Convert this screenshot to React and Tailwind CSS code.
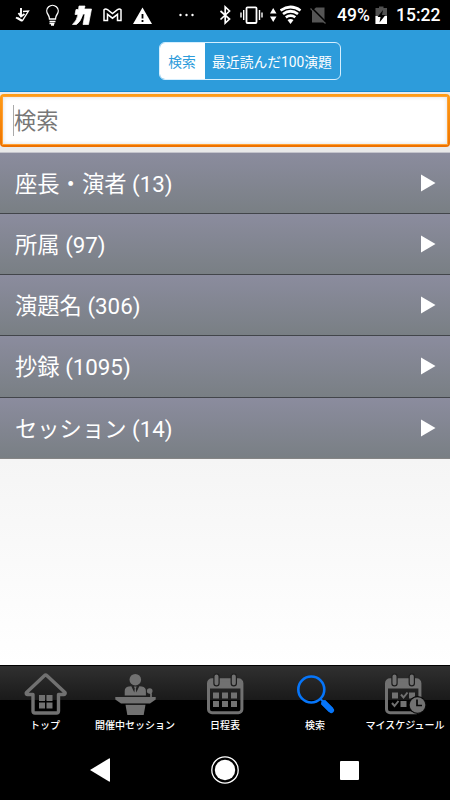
import React from 'react';

const results = [
  { label: '座長・演者', count: 13 },
  { label: '所属', count: 97 },
  { label: '演題名', count: 306 },
  { label: '抄録', count: 1095 },
  { label: 'セッション', count: 14 },
];

const HomeIcon = () => (
  <svg width="90" height="44" viewBox="0 0 90 44" fill="none" stroke="#717171">
    <path d="M33 23.500V40a2 2 0 0 0 2 2h21.500a2 2 0 0 0 2-2V23.500H64a1.300 1.300 0 0 0 1-2L46.500 4.300a1.200 1.200 0 0 0-1.700 0L26.500 21.500a1.200 1.200 0 0 0 .8 2z" strokeWidth="3.400" strokeLinejoin="round" />
    <path d="M39 24h6v6h-6zM46.500 24h6v6h-6zM39 31.500h6v6h-6zM46.500 31.500h6v6h-6z" fill="#717171" stroke="none" />
  </svg>
);

const PodiumIcon = () => (
  <svg width="90" height="44" viewBox="0 0 90 44" fill="#717171">
    <circle cx="45.300" cy="8.700" r="5.800" />
    <path d="M34.700 24.500V20q0-4 4-4.500l2.600-.3 3 6.300.5-4-.9-2h2.800l-.9 2 .5 4 3-6.300 2.600.3q4 .5 4 4.500v4.500z" />
    <path d="M25.300 26h40.400v2.500l-5.700 4H31l-5.700-4z" />
    <path d="M35.500 33.700h20L53.500 45h-16z" />
    <circle cx="59.700" cy="20" r="2.800" />
    <path d="M60 20q1.700 3 1 6.500" fill="none" stroke="#717171" strokeWidth="1.600" />
  </svg>
);

const CalendarFrame = () => (
  <>
    <path d="M29 9h33v8.500H29z" fill="#717171" />
    <rect x="28.500" y="8.800" width="33.400" height="33" rx="3.500" fill="none" stroke="#717171" strokeWidth="3" />
    <rect x="33.900" y="2.800" width="5.200" height="12" rx="2.600" fill="#717171" stroke="#1d1d1d" strokeWidth="1.200" />
    <rect x="51.200" y="2.800" width="5.200" height="12" rx="2.600" fill="#717171" stroke="#1d1d1d" strokeWidth="1.200" />
  </>
);

const CalendarIcon = () => (
  <svg width="90" height="44" viewBox="0 0 90 44">
    <CalendarFrame />
    <path d="M33 21.500h6v6h-6zM42 21.500h6v6h-6zM51 21.500h6v6h-6zM33 30h6v6h-6zM42 30h6v6h-6zM51 30h6v6h-6z" fill="#717171" />
  </svg>
);

const SearchIcon = () => (
  <svg width="90" height="44" viewBox="0 0 90 44" fill="none" stroke="#0675f9">
    <circle cx="41.300" cy="18.500" r="13" strokeWidth="2.600" />
    <path d="M50.500 28l2.500 2.500" strokeWidth="2" />
    <path d="M53 31l8 8" strokeWidth="6" />
    <path d="M54 32l7.300 7.300" strokeWidth="5.500" strokeLinecap="round" />
  </svg>
);

const ScheduleIcon = () => (
  <svg width="90" height="44" viewBox="0 0 90 44">
    <g transform="translate(-2 0)">
      <CalendarFrame />
    </g>
    <path d="M32 21.500h6v6h-6zM40.500 30h6v6h-6zM49 21.500h6v4l-4 2h-2z" fill="#717171" />
    <path d="M41 23.500l2.500 3 4-5M32 32l2.500 3 4-5" fill="none" stroke="#717171" strokeWidth="2" />
    <circle cx="57.500" cy="34" r="9" fill="#080808" />
    <circle cx="57.500" cy="34" r="7.800" fill="#717171" />
    <path d="M57 28.500v6h5" fill="none" stroke="#080808" strokeWidth="1.700" />
  </svg>
);

const tabs = [
  { label: 'トップ', Icon: HomeIcon },
  { label: '開催中セッション', Icon: PodiumIcon },
  { label: '日程表', Icon: CalendarIcon },
  { label: '検索', Icon: SearchIcon },
  { label: 'マイスケジュール', Icon: ScheduleIcon },
];

const StatusBar = () => (
  <div className="flex h-[30px] shrink-0 items-center bg-black text-white">
    {/* Notifications */}
    <svg className="ml-[15px] shrink-0" width="15" height="30" viewBox="15 0 15 30" fill="none" stroke="white">
      <path d="M21 8v8.500M18.500 13l2.500 3.500 3.500-2.500" strokeWidth="1.900" />
      <path d="M23 11.500l5.500-.5-6 9.500-5-3" strokeWidth="1.300" />
      <path d="M16 17.500l6 3.500" strokeWidth="2" />
    </svg>
    <svg className="ml-4 shrink-0" width="14" height="30" viewBox="46 0 14 30" fill="none" stroke="white" strokeWidth="1.300">
      <path d="M49.500 19q0-2.500-1.500-4.500a5.700 5.700 0 1 1 9 0q-1.500 2-1.500 4.500zM49.500 21.500h6M49.500 23.500h5M51 25h3" />
    </svg>
    <svg className="ml-3 shrink-0" width="21" height="30" viewBox="72 0 21 30" fill="white" stroke="white" strokeWidth=".7">
      <path d="M79 6h6l-.8 3h7.300L88.500 24.500H83L85 14h-2Q80.500 22 76.500 24.500h-4q4.500-4 5.500-10h-3l1-5h2.500z" />
    </svg>
    <svg className="ml-2.5 shrink-0" width="19" height="30" viewBox="103 0 19 30" fill="none" stroke="white" strokeWidth="1.500">
      <path d="M104 9.700v10.800h3.500V14.300l5 3.900 5-3.900v6.200h3.500V9.700q-1.500-1.500-3.500 0l-5 3.800-5-3.800q-2-1.500-3.500 0z" />
    </svg>
    <svg className="ml-[11px] shrink-0" width="19" height="30" viewBox="133 0 19 30">
      <path d="M142.500 7.500L152 24h-19z" fill="white" />
      <path d="M142.500 14v4.500M142.500 20v2" stroke="black" strokeWidth="1.800" />
    </svg>
    <svg className="ml-[27px] shrink-0" width="15" height="30" viewBox="179 0 15 30" fill="white">
      <circle cx="180.500" cy="15" r="1.200" />
      <circle cx="186.500" cy="15" r="1.200" />
      <circle cx="192.500" cy="15" r="1.200" />
    </svg>

    {/* System */}
    <svg className="ml-[25px] shrink-0" width="13" height="30" viewBox="219 0 13 30" fill="none" stroke="white" strokeWidth="1.700">
      <path d="M220.500 11l9 8-4.300 4V7l4.300 4-9 8.500" />
    </svg>
    <svg className="ml-2 shrink-0" width="23" height="30" viewBox="240 0 23 30" fill="none" stroke="white">
      <rect x="246.500" y="7.300" width="10" height="15.700" rx="1" strokeWidth="1.800" />
      <path d="M243.700 10v10M241 12.500v5M259.500 10v10M262 12.500v5" strokeWidth="1.400" />
    </svg>
    <svg className="ml-[7px] shrink-0" width="7" height="30" viewBox="270 0 7 30" fill="white">
      <path d="M270 13.500l3.200-5.500 3.300 5.500zM270 16.500h6.500L273.200 22z" />
    </svg>
    <svg className="ml-[3px] shrink-0" width="22" height="30" viewBox="280 0 22 30" fill="none" stroke="white">
      <path d="M280.500 10.500q10-7 20 0M283 14q7.500-5.500 15 0M285.800 17.300q5-3.500 9.500 0" strokeWidth="2.700" />
      <path d="M287.500 20q3-2 6 0l-3 4z" fill="white" stroke="none" />
    </svg>
    <svg className="ml-2 shrink-0" width="17" height="30" viewBox="309 0 17 30">
      <path d="M315 7.500h8.500V22.500H311V11z" fill="#555" />
      <path d="M309.500 8.500l15 15" stroke="#555" strokeWidth="1.300" />
      <path d="M311.500 8.500l13 13" stroke="black" strokeWidth="1.500" />
    </svg>
    <span className="ml-[10px] w-[34px] shrink-0 whitespace-nowrap text-[17.500px] leading-[30px] font-medium">49%</span>
    <svg className="ml-[4px] shrink-0" width="13" height="30" viewBox="374 0 13 30">
      <path d="M378 6.500h4.500V8h3.500v16h-11.500V8h3.500z" fill="#505050" />
      <path d="M374.500 16H386v8h-11.500z" fill="white" />
      <path d="M382 10l-5.500 7h3l-1 5.500 6-7.500h-3.500z" fill="black" />
    </svg>
    <span className="ml-[8px] whitespace-nowrap text-[17.500px] leading-[30px] font-medium">15:22</span>
  </div>
);

const App = () => {
  return (
    <div className="flex h-[800px] w-[450px] flex-col overflow-hidden bg-white font-['Roboto','Noto_Sans_CJK_JP',sans-serif]">
      <StatusBar />

      {/* Header */}
      <header className="flex h-[62px] shrink-0 justify-center border-b border-[#1688cf] bg-[#2d9cdb] pl-[49px] pt-3">
        <div className="flex h-[38px] w-[182px] overflow-hidden rounded-md border border-[#d5efff] text-[13.800px] leading-[38px]">
          <button className="w-[45px] shrink-0 bg-white text-[#2d9cdb]">検索</button>
          <button className="flex-1 whitespace-nowrap text-white">最近読んだ100演題</button>
        </div>
      </header>

      {/* Search field */}
      <div className="h-[60.500px] shrink-0 border-b border-[#c4c4cc] bg-[#e9e9e9] pt-[1.500px]">
        <div className="h-[53.500px] rounded-[4px] bg-linear-to-b from-[#ff9d17] to-[#ed7100] p-[3px]">
          <div className="flex h-full items-center bg-white pl-[10px] shadow-[inset_0_0_4px_#ddd,0_0_0_1px_#ffa033]">
            <span className="h-[31px] w-px bg-[#aaa]" />
            <span className="pt-px text-[22.200px] leading-[46px] text-[#777]">検索</span>
          </div>
        </div>
      </div>

      {/* Result categories */}
      <ul className="shrink-0">
        {results.map((item) => (
          <li
            key={item.label}
            className="flex h-[61.250px] items-center justify-between border-b border-[#42454a] bg-linear-to-b from-[#8b8c9e] to-[#797f84] pr-[14px] pl-[15px] text-white last:border-[#858585]"
          >
            <span className="pt-[2px] text-[22.300px] leading-[58px]">{item.label} ({item.count})</span>
            <svg width="15" height="18" viewBox="0 0 15 18" fill="white">
              <path d="M0 .5L14.500 9 0 17.500z" />
            </svg>
          </li>
        ))}
      </ul>

      <div className="flex-1 bg-linear-to-b from-[#f5f5f5] to-white" />

      {/* Tab bar */}
      <nav className="flex h-[75px] shrink-0 border-t border-black bg-linear-to-b from-[#303030] from-0% via-[#1a1a1a] via-46% to-black to-46%">
        {tabs.map(({ label, Icon }) => (
          <div key={label} className="flex w-[90px] flex-col items-center pt-[5px]">
            <Icon />
            <span className="whitespace-nowrap pt-px text-[10px] leading-[20px] font-medium text-white">{label}</span>
          </div>
        ))}
      </nav>

      {/* Android navigation */}
      <div className="flex h-[60px] shrink-0 items-center justify-between bg-black pr-[91px] pl-[90px]">
        <svg width="20" height="24" viewBox="0 0 20 24" fill="white">
          <path d="M0 12L19 .5q1-.5 1 .5v22q0 1-1 .5z" />
        </svg>
        <svg width="28" height="28" viewBox="0 0 28 28">
          <circle cx="14" cy="14" r="13.200" fill="none" stroke="white" strokeWidth="1.300" />
          <circle cx="14" cy="14" r="10.200" fill="white" />
        </svg>
        <span className="h-[19px] w-[19px] rounded-[1px] bg-white" />
      </div>
    </div>
  );
};

export default App;
